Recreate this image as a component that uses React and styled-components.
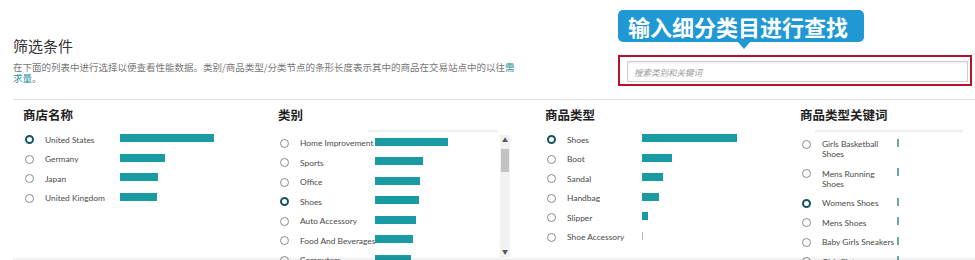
import styled, { createGlobalStyle } from "styled-components";

const GlobalStyle = createGlobalStyle`
  html, body {
    margin: 0;
    padding: 0;
    background: #fff;
  }
  body {
    font-family: "Open Sans", "Noto Sans CJK SC", sans-serif;
    color: #444;
    overflow: hidden;
  }
`;

const Page = styled.div`
  width: 975px;
  height: 260px;
  padding: 10px 0 0 13px;
  box-sizing: border-box;
  overflow: hidden;
`;

const Header = styled.div`
  display: flex;
  justify-content: space-between;
  align-items: flex-start;
  padding-right: 3px;
`;

const Intro = styled.div`
  width: 506px;
  padding-top: 26px;
`;

const Title = styled.h1`
  margin: 0;
  font-family: "Noto Sans CJK SC", sans-serif;
  font-size: 15px;
  line-height: 20px;
  font-weight: 400;
  color: #333;
`;

const Desc = styled.p`
  margin: 6px 0 0;
  font-family: "Noto Sans CJK SC", sans-serif;
  font-size: 9.5px;
  line-height: 11px;
  color: #777;
`;

const Link = styled.span`
  color: #1d8a92;
`;

const SearchArea = styled.div`
  width: 354px;
`;

const Callout = styled.div`
  position: relative;
  display: inline-flex;
  align-items: center;
  height: 32px;
  padding: 0 16px 0 10px;
  background: #1f98d3;
  border-radius: 5px;
  color: #fff;
  font-family: "Noto Sans CJK SC", sans-serif;
  font-weight: 700;
  font-size: 22px;

  &::after {
    content: "";
    position: absolute;
    left: 120px;
    bottom: -7px;
    border-left: 6px solid transparent;
    border-right: 6px solid transparent;
    border-top: 7px solid #1f98d3;
  }
`;

const SearchBox = styled.div`
  margin-top: 13px;
  border: 2px solid #b3132c;
  padding: 4px 2px 2px 7px;
`;

const SearchInput = styled.input`
  display: block;
  width: 100%;
  height: 21px;
  box-sizing: border-box;
  border: 1px solid #cfcfcf;
  box-shadow: inset 0 1px 2px rgba(0, 0, 0, 0.08);
  padding: 0 6px;
  font-family: "Noto Sans CJK SC", sans-serif;
  font-size: 8.5px;
  font-style: italic;
  outline: none;
  &::placeholder {
    color: #9a9a9a;
  }
`;

const Divider = styled.hr`
  margin: 13px 0 0;
  border: 0;
  border-top: 1px solid #e0e0e0;
`;

const Columns = styled.div`
  position: relative;
  display: grid;
  grid-template-columns: 255px 267px 255px 1fr;
  height: 160px;
  overflow: hidden;

  &::after {
    content: "";
    position: absolute;
    left: 0;
    right: 0;
    bottom: 0;
    height: 4px;
    background: linear-gradient(to bottom, rgba(0, 0, 0, 0), rgba(0, 0, 0, 0.07));
  }
`;

const Column = styled.div`
  padding-top: 7px;
  min-width: 0;
`;

const Heading = styled.h2`
  margin: 0 0 7px 10px;
  font-family: "Noto Sans CJK SC", sans-serif;
  font-size: 12.5px;
  line-height: 16px;
  font-weight: 700;
  color: #222;
`;

const List = styled.div`
  position: relative;
  padding-top: ${(p) => p.$top || 0}px;
  width: ${(p) => (p.$width ? `${p.$width}px` : "auto")};
  height: ${(p) => (p.$scroll ? "127px" : "auto")};
  overflow: hidden;

  &::before {
    content: "";
    display: ${(p) => (p.$shade ? "block" : "none")};
    position: absolute;
    top: 0;
    left: ${(p) => p.$shade}px;
    right: 12px;
    height: 4px;
    background: linear-gradient(to bottom, rgba(0, 0, 0, 0.08), rgba(0, 0, 0, 0));
    pointer-events: none;
  }
`;

const Row = styled.div`
  display: grid;
  grid-template-columns: 20px 76px 1fr;
  align-items: start;
  padding: 4.75px 0 4.75px 12px;
`;

const Radio = styled.span`
  display: block;
  width: 9px;
  height: 9px;
  margin-top: 0.5px;
  box-sizing: border-box;
  border-radius: 50%;
  background: #fff;
  border: ${(p) => (p.$checked ? "2.5px solid #16545e" : "1px solid #8a8a8a")};
`;

const Label = styled.span`
  font-family: Lato, "Open Sans", sans-serif;
  font-size: 8.4px;
  line-height: 10px;
  color: #4a4a4a;
  white-space: ${(p) => (p.$wrap ? "normal" : "nowrap")};
  max-width: ${(p) => (p.$wrap ? "73px" : "none")};
`;

const Bar = styled.span`
  position: relative;
  display: block;
  height: 8px;
  margin-top: -0.5px;
  margin-left: -1px;
  background: ${(p) => p.$color || "#1a9aa2"};
`;

const ScrollBar = styled.div`
  position: absolute;
  top: 5px;
  right: 0;
  width: 10px;
  height: 122px;
  background: #f2f2f2;
  display: flex;
  flex-direction: column;
  align-items: center;
`;

const Arrow = styled.span`
  font-size: 6px;
  line-height: 10px;
  height: 10px;
  color: #555;
`;

const Thumb = styled.div`
  width: 8px;
  height: 23px;
  margin-top: 4px;
  background: #c3c3c3;
`;

const Spacer = styled.div`
  flex: 1;
`;

const stores = [
  { name: "United States", w: 94, on: true },
  { name: "Germany", w: 45 },
  { name: "Japan", w: 38 },
  { name: "United Kingdom", w: 37 },
];

const categories = [
  { name: "Home Improvement", w: 73 },
  { name: "Sports", w: 48 },
  { name: "Office", w: 45 },
  { name: "Shoes", w: 44, on: true },
  { name: "Auto Accessory", w: 41 },
  { name: "Food And Beverages", w: 38 },
  { name: "Computers", w: 36 },
];

const types = [
  { name: "Shoes", w: 95, on: true },
  { name: "Boot", w: 30 },
  { name: "Sandal", w: 21 },
  { name: "Handbag", w: 17 },
  { name: "Slipper", w: 6 },
  { name: "Shoe Accessory", w: 1, color: "#b5b5b5" },
];

const keywords = [
  { name: "Girls Basketball Shoes", w: 2 },
  { name: "Mens Running Shoes", w: 2 },
  { name: "Womens Shoes", w: 2, on: true },
  { name: "Mens Shoes", w: 2 },
  { name: "Baby Girls Sneakers", w: 2 },
  { name: "Girls Flats", w: 2 },
];

const Rows = ({ items, wrap, barColor }) =>
  items.map((it) => (
    <Row key={it.name}>
      <Radio $checked={it.on} />
      <Label $wrap={wrap}>{it.name}</Label>
      <Bar style={{ width: it.w }} $color={it.color || barColor} />
    </Row>
  ));

const App = () => {
  return (
    <Page>
      <GlobalStyle />
      <Header>
        <Intro>
          <Title>筛选条件</Title>
          <Desc>
            在下面的列表中进行选择以便查看性能数据。类别/商品类型/分类节点的条形长度表示其中的商品在交易站点中的以往
            <Link>需求量</Link>。
          </Desc>
        </Intro>
        <SearchArea>
          <Callout>输入细分类目进行查找</Callout>
          <SearchBox>
            <SearchInput placeholder="搜索类别和关键词" />
          </SearchBox>
        </SearchArea>
      </Header>
      <Divider />
      <Columns>
        <Column>
          <Heading>商店名称</Heading>
          <List>
            <Rows items={stores} />
          </List>
        </Column>
        <Column>
          <Heading>类别</Heading>
          <List $top={3.5} $width={242} $scroll $shade={100}>
            <Rows items={categories} />
            <ScrollBar>
              <Arrow>▲</Arrow>
              <Thumb />
              <Spacer />
              <Arrow>▼</Arrow>
            </ScrollBar>
          </List>
        </Column>
        <Column>
          <Heading>商品类型</Heading>
          <List>
            <Rows items={types} />
          </List>
        </Column>
        <Column>
          <Heading>商品类型关键词</Heading>
          <List $top={4.25} $scroll $shade={25}>
            <Rows items={keywords} wrap barColor="#6aa7a9" />
          </List>
        </Column>
      </Columns>
    </Page>
  );
};

export default App;
